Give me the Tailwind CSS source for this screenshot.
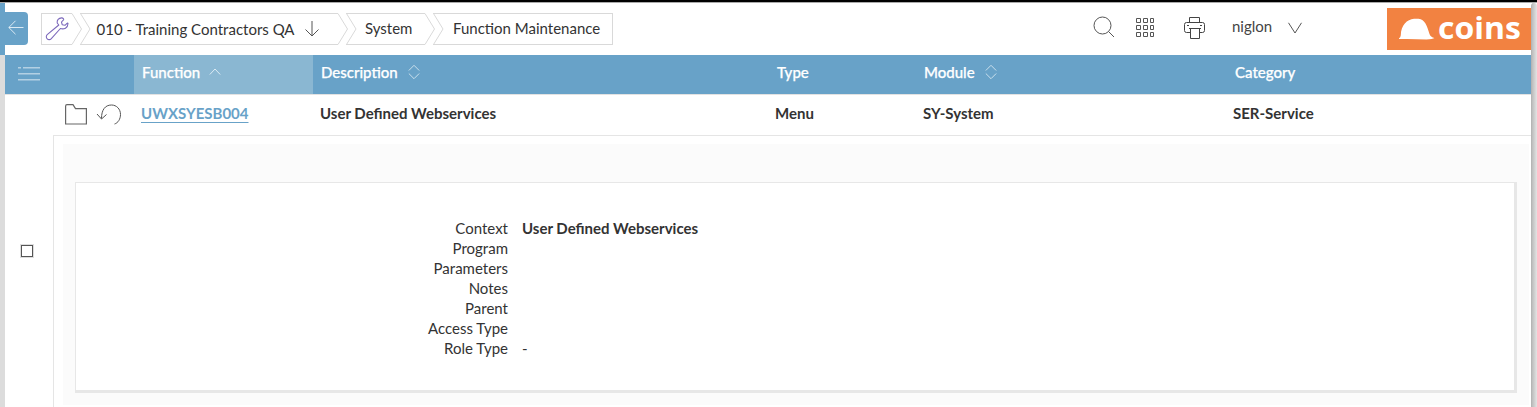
<!DOCTYPE html>
<html lang="en">
<head>
<meta charset="utf-8">
<title>Function Maintenance</title>
<script src="https://cdn.jsdelivr.net/npm/@tailwindcss/browser@4"></script>
</head>
<body class="h-[407px] overflow-hidden bg-white font-[Lato,sans-serif] text-[15px] leading-5 text-[#333]">
<svg class="hidden">
  <symbol id="sep" viewBox="0 0 20 32"><path d="M0 .5L9.500 16L0 31.500M8.500 .5L18 16L8.500 31.500M8 .5H20M8 31.500H20" fill="none" stroke="#d9d9d9"/></symbol>
  <symbol id="sort" viewBox="0 0 12 16"><path d="M.8 6.500L6 1.300L11.200 6.500M.8 9.500L6 14.700L11.200 9.500" fill="none" stroke="#d5e6f1" stroke-width=".9"/></symbol>
</svg>
<div class="flex h-full flex-col border-t-2 border-black">
  <div class="h-px shrink-0 bg-[#aaa]"></div>
  <div class="flex min-h-0 flex-1">
    <div class="w-[5px] shrink-0 bg-[#dcdcdc]"><div class="h-[52px] bg-[#68a2c8]"></div></div>
    <main class="flex w-[1526px] shrink-0 flex-col">
      <header class="flex h-[52px] shrink-0 items-start">
        <button class="mt-[9px] flex h-[33px] w-[23px] items-center rounded-r-[4px] bg-[#68a2c8]" aria-label="Back">
          <svg class="-mt-px ml-[3px] h-4 w-4" viewBox="0 0 16 16" fill="none" stroke="#e8f2f8" stroke-width=".9"><path d="M15.500 7.500H1M7.500 .8L.8 7.500l6.700 6.700"/></svg>
        </button>
        <nav class="ml-[13px] mt-[10px] flex h-8">
          <div class="flex w-[31px] items-center border-y border-l border-[#d9d9d9]">
            <svg class="-mt-px ml-[2px] h-[26px] w-[26px] shrink-0" viewBox="0 0 26 26" fill="none" stroke="#7c68bb" stroke-width="1.100" stroke-linejoin="round"><path d="M17.600 1.900c-3 .2-4.800 2.300-4.400 5.100L14.800 9 L3.200 18.700c-1.200 1.200-1.200 3 0 4.100 1.100 1.100 2.800 1.200 3.900 0l9.300-10.300c3.500 1.200 7.500-.4 7.600-4.900 0-.6-.5-.8-1-.3l-2 2-2.800-.6-.7-2.700 2-2.200c.6-.8-.400-2-1.900-1.900z"/></svg>
          </div>
          <svg class="h-8 w-5 shrink-0"><use href="#sep"/></svg>
          <div class="flex w-[246px] items-center border-y border-[#d9d9d9] pl-[4.6px]"><span class="whitespace-nowrap">010 - Training Contractors QA</span>
            <svg class="-mt-px ml-[9px] h-4 w-4 shrink-0" viewBox="0 0 16 16" fill="none" stroke="#555"><path d="M8 0v15M1.500 8.500L8 15l6.500-6.500"/></svg>
          </div>
          <svg class="h-8 w-5 shrink-0"><use href="#sep"/></svg>
          <div class="flex w-[67px] items-center border-y border-[#d9d9d9] pb-[2px] pl-[7px]">System</div>
          <svg class="h-8 w-5 shrink-0"><use href="#sep"/></svg>
          <div class="flex w-[168px] items-center whitespace-nowrap border-y border-r border-[#d9d9d9] pb-[2px] pl-[8px]">Function Maintenance</div>
        </nav>
        <div class="ml-auto flex h-full">
          <svg class="mr-[20px] mt-[13px] h-[22px] w-[22px]" viewBox="0 0 22 22" fill="none" stroke="#555"><circle cx="9.500" cy="9.500" r="8.500"/><path d="M15.500 15.500l5.500 5.500"/></svg>
          <svg class="mr-[29px] mt-[15px] h-5 w-5" viewBox="0 0 20 20" fill="none" stroke="#555"><path d="M1.500.5h4v4h-4zM8.500.5h4v4h-4zM15.500.5h3v4h-3zM1.500 7.500h4v4h-4zM8.500 7.500h4v4h-4zM15.500 7.500h3v4h-3zM1.500 14.500h4v4h-4zM8.500 14.500h4v4h-4zM15.500 14.500h3v4h-3z"/></svg>
          <svg class="mt-[14px] h-[22px] w-[22px]" viewBox="0 0 22 22" fill="none" stroke="#444"><path d="M5.500 5.500v-5h10v5M6.500 15.500h-4q-2 0-2-2v-6q0-2 2-2h16q2 0 2 2v6q0 2-2 2h-3M6.500 11.500h9v10h-9zM5 11.500h12M3 8.500h2M16 8.500h2"/></svg>
          <span class="ml-[26px] mt-[13px] w-[41px] text-[#444]">niglon</span>
          <svg class="ml-[14px] mt-[19px] h-3 w-4" viewBox="0 0 16 12" fill="none" stroke="#555"><path d="M1.500 .8L8 11l6.500-10.200"/></svg>
          <div class="ml-[84px] mt-[5px] flex h-[42px] w-36 items-center bg-[#f28241]">
            <svg class="ml-3 h-[42px] w-[36px] shrink-0" viewBox="12 0 36 42"><path fill="#fff" d="M12 30.200q1.500-.6 1.800-3C14 17 20 11.500 27 10.800h4.500C38 11.500 40 18 42.500 26q1 3.200 5 4-2 1.400-8 1.400-13-.5-27.500-.3z"/></svg>
            <span class="ml-[3px] mt-[-4px] origin-left scale-x-[1.030] font-['Open_Sans',sans-serif] text-[31px] font-bold leading-[42px] text-white">coins</span>
          </div>
        </div>
      </header>
      <div class="flex h-10 shrink-0 border-b border-[#e2e2e2] bg-[#68a2c8] font-medium text-white [-webkit-text-stroke:.25px_white]">
        <div class="w-[129px]"><svg class="ml-[13px] mt-3 h-4 w-[22px]" fill="none" stroke="#b3d0e3" stroke-width="1.400"><path d="M0 .8h3M5 .8h17M0 6.800h22M0 12.800h22"/></svg></div>
        <div class="flex w-[179px] bg-[#8ab7d2] pl-2 pt-[7px]"><span class="w-[57px]">Function</span><svg class="ml-[10px] mt-[5px] h-[9px] w-3" fill="none" stroke="#dcebf4"><path d="M.8 7.500L6 2l5.200 5.500"/></svg></div>
        <div class="flex w-[456px] pl-2 pt-[7px]"><span class="w-[76px]">Description</span><svg class="ml-[11px] mt-[2px] h-4 w-3"><use href="#sort"/></svg></div>
        <div class="w-[147px] pl-2 pt-[7px]">Type</div>
        <div class="flex w-[311px] pl-2 pt-[7px]"><span class="w-[50px]">Module</span><svg class="ml-[11px] mt-[2px] h-4 w-3"><use href="#sort"/></svg></div>
        <div class="pl-2 pt-[7px]">Category</div>
      </div>
      <div class="flex h-10 shrink-0 font-bold">
        <div class="flex w-[136px] pl-[60px]">
          <svg class="mt-[9px] h-[21px] w-[22px]" fill="none" stroke="#666" stroke-width="1.200"><path d="M.6 20V2.200Q.6.600 2 .6h6l2.500 4H21.400V20z"/></svg>
          <svg class="ml-[9px] mt-[9px] h-[22px] w-[26px]" fill="none" stroke="#555"><path d="M5.500 14.500C5.500 6 9 1 15.500 1c5 0 9 4 9 9.500 0 4.500-2.500 8.500-6 9.500M1 10l4.500 5 5-4.500"/></svg>
        </div>
        <div class="w-[179px] pt-2 text-[#68a2c8] underline decoration-1 underline-offset-[3px] [text-decoration-skip-ink:none]">UWXSYESB004</div>
        <div class="w-[455px] pt-2">User Defined Webservices</div>
        <div class="w-[148px] pt-2">Menu</div>
        <div class="w-[310px] pt-2">SY-System</div>
        <div class="pt-2">SER-Service</div>
      </div>
      <div class="flex min-h-0 flex-1">
        <div class="w-12"><div class="ml-4 mt-[110px] h-3 w-3 border border-[#555] shadow-[0_0_0_1px_#ddd]"></div></div>
        <div class="min-w-0 flex-1 border-l border-t border-[#e5e5e5] pl-[9px] pr-[2px] pt-2">
          <div class="h-[261px] bg-[#fbfbfb] pl-3 pr-3 pt-[38px]">
            <section class="h-[211px] border-b-[3px] border-l border-r-[3px] border-t border-[#e7e7e7] bg-white pt-[35px]">
              <dl class="grid grid-cols-[432px_1fr] gap-x-[14px] leading-5">
                <dt class="text-right">Context</dt><dd class="font-bold">User Defined Webservices</dd>
                <dt class="text-right">Program</dt><dd></dd>
                <dt class="text-right">Parameters</dt><dd></dd>
                <dt class="text-right">Notes</dt><dd></dd>
                <dt class="text-right">Parent</dt><dd></dd>
                <dt class="text-right">Access Type</dt><dd></dd>
                <dt class="text-right">Role Type</dt><dd>-</dd>
              </dl>
            </section>
          </div>
        </div>
      </div>
    </main>
    <div class="flex-1 rounded-t-[4px] border-l border-[#b5b5b5] bg-gradient-to-r from-[#bcbcbc] to-[#e4e4e4]"></div>
  </div>
</div>
</body>
</html>
